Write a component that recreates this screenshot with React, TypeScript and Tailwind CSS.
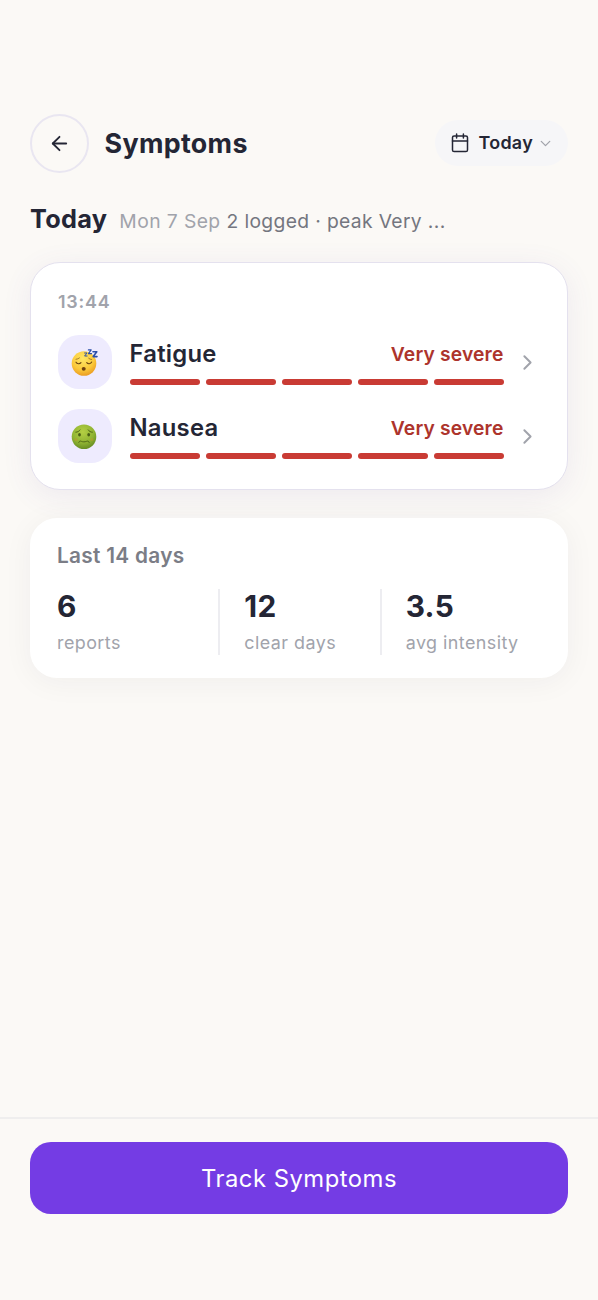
import type { ReactNode } from 'react';
import { ArrowLeft, ChevronDown, ChevronRight } from 'lucide-react';

const SleepyFace = () => (
  <svg width="28" height="28" viewBox="0 0 28 28" aria-hidden="true">
    <defs>
      <radialGradient id="sleepy" cx="0.45" cy="0.3" r="0.75">
        <stop offset="0" stopColor="#ffe766" />
        <stop offset="0.6" stopColor="#fbc93a" />
        <stop offset="1" stopColor="#e8941f" />
      </radialGradient>
    </defs>
    <circle cx="13" cy="15.5" r="12.3" fill="url(#sleepy)" />
    <g fill="none" stroke="#6b4310" strokeWidth="1.1" strokeLinecap="round">
      <path d="M5 14.2c1 1.9 3.8 2 5 .5M15.7 14.7c1.3 1.5 4 1.3 5-.6" />
      <path d="M5 11.3c1.3-.1 2.5-.6 3.5-1.4M17.7 10.3c.8.7 1.8 1.1 3 1.2" strokeWidth="0.6" />
    </g>
    <ellipse cx="12.7" cy="20.8" rx="2" ry="1.9" fill="#71420f" />
    <g fill="none" stroke="#2b4fa8" strokeLinejoin="round" strokeLinecap="round">
      <path d="M13.6 5h2.4l-2.4 3h2.5" strokeWidth="1" />
      <path d="M17.4 1.9h2.8l-2.7 3.8h3" strokeWidth="1.2" />
      <path d="M22 3.8h3.8l-3.6 4.8h3.8" strokeWidth="1.6" />
    </g>
  </svg>
);

const NauseatedFace = () => (
  <svg width="28" height="28" viewBox="0 0 28 28" aria-hidden="true">
    <defs>
      <radialGradient id="nauseated" cx="0.45" cy="0.3" r="0.75">
        <stop offset="0" stopColor="#b4cf43" />
        <stop offset="0.6" stopColor="#8fb332" />
        <stop offset="1" stopColor="#5f8520" />
      </radialGradient>
    </defs>
    <circle cx="13" cy="14.8" r="12.3" fill="url(#nauseated)" />
    <ellipse cx="8.5" cy="12.7" rx="1.4" ry="1.7" fill="#4a5f14" />
    <ellipse cx="17.7" cy="12.7" rx="1.4" ry="1.7" fill="#4a5f14" />
    <g fill="none" stroke="#4f6716" strokeWidth="1" strokeLinecap="round" strokeLinejoin="round">
      <path d="M4.8 10.2c1.9 0 3.3-.9 4.2-2.3M17.2 7.9c.9 1.4 2.3 2.3 4.2 2.3" />
      <path d="M7.8 20.4c.4-1.5 1.6-1.6 2.7-1 1.4.6 3.4.6 4.8 0 1.2-.6 2.5-.5 2.9 1" />
    </g>
    <circle cx="5" cy="17.5" r="1.5" fill="#c09a2d" opacity="0.5" />
    <circle cx="21" cy="17.5" r="1.5" fill="#c09a2d" opacity="0.5" />
  </svg>
);

const CalendarIcon = () => (
  <svg
    width="18"
    height="20"
    viewBox="0 0 18 20"
    fill="none"
    stroke="#242635"
    strokeWidth="1.5"
    strokeLinecap="round"
    strokeLinejoin="round"
  >
    <rect x="1.5" y="3" width="15" height="15.5" rx="1.6" />
    <path d="M1.5 8h15M5.6 1v4M12.4 1v4" />
  </svg>
);

type SymptomRowProps = {
  name: string;
  severity: string;
  level: number;
  icon: ReactNode;
};

const SymptomRow = ({ name, severity, level, icon }: SymptomRowProps) => (
  <div className="flex h-[54px] items-center">
    <div className="flex size-[54px] shrink-0 items-center justify-center rounded-[21px] bg-[#eeebfe] pr-px pb-px">
      {icon}
    </div>
    <div className="-mt-px ml-[17.5px] w-[375px]">
      <div className="flex h-8 items-center justify-between">
        <span className="text-[23.8px] font-semibold tracking-[0.25px] text-[#242635]">{name}</span>
        <span className="mt-px text-[19.3px] font-semibold tracking-[0.15px] text-[#ad342c]">{severity}</span>
      </div>
      <div className="mt-[9.5px] flex gap-1.5">
        {Array.from({ length: level }, (_, i) => (
          <div key={i} className="h-1.5 flex-1 rounded-full bg-[#c93b34]" />
        ))}
      </div>
    </div>
    <ChevronRight className="ml-[11.5px] text-[#a1a3ab]" size={25} strokeWidth={1.9} />
  </div>
);

const Stat = ({ value, label }: { value: string; label: string }) => (
  <div className="flex flex-col">
    <span className="h-9 text-[29.8px] leading-[35px] font-bold tracking-[0.3px] text-[#242635]">{value}</span>
    <span className="mt-1.5 text-[17.9px] leading-[23px] tracking-[0.45px] text-[#a1a3ab]">{label}</span>
  </div>
);

export default function App() {
  return (
    <div className="flex h-[1300px] w-[598px] flex-col bg-[#fbf9f6] font-['Inter',sans-serif] whitespace-nowrap">
      <header className="mx-[30px] mt-[113px] flex h-[60px] items-center">
        <button className="flex size-[59px] items-center justify-center rounded-full border-2 border-[#e9e6f1]">
          <ArrowLeft className="text-[#242635]" size={23} strokeWidth={1.9} />
        </button>
        <h1 className="mt-px ml-[15.5px] text-[26.8px] font-bold tracking-[0.35px] text-[#242635]">Symptoms</h1>
        <button className="ml-auto flex h-[46px] w-[133px] items-center rounded-full bg-[#f6f6f8] pl-[15.5px]">
          <CalendarIcon />
          <span className="ml-2.5 text-[17.9px] font-semibold tracking-[0.3px] text-[#242635]">Today</span>
          <ChevronDown className="ml-1 text-[#a1a3ab]" size={17} strokeWidth={1.8} />
        </button>
      </header>

      <div className="mx-[30px] mt-[27px] flex h-9 items-baseline">
        <h2 className="text-[25.3px] font-bold tracking-[0.3px] text-[#242635]">Today</h2>
        <span className="ml-3 text-[19.3px] tracking-[0.4px] text-[#a1a3ab]">Mon 7 Sep</span>
        <span className="ml-1.5 text-[19.3px] tracking-[0.35px] text-[#74767f]">2 logged · peak Very ...</span>
      </div>

      <main className="mx-[30px] mt-[26px] flex flex-col gap-7">
        <section className="h-[228px] rounded-[30px] border border-[#e4e1ee] bg-white px-[27px] pt-[26px] shadow-[0_6px_30px_rgba(100,80,170,0.09)]">
          <div className="mb-5 h-[26px] text-[17.9px] leading-[26px] font-semibold tracking-[0.8px] text-[#a1a3ab]">
            13:44
          </div>
          <div className="flex flex-col gap-5">
            <SymptomRow name="Fatigue" severity="Very severe" level={5} icon={<SleepyFace />} />
            <SymptomRow name="Nausea" severity="Very severe" level={5} icon={<NauseatedFace />} />
          </div>
        </section>

        <section className="h-[160px] rounded-[27px] bg-white px-[27px] pt-[22px] shadow-[0_4px_30px_rgba(40,35,60,0.05)]">
          <div className="h-[30px] text-[20.8px] leading-[31px] font-semibold tracking-[0.3px] text-[#7b7d86]">
            Last 14 days
          </div>
          <div className="mt-[19px] grid h-[66px] grid-cols-3">
            <Stat value="6" label="reports" />
            <div className="border-l-2 border-[#ededf1] pl-6">
              <Stat value="12" label="clear days" />
            </div>
            <div className="border-l-2 border-[#ededf1] pl-6">
              <Stat value="3.5" label="avg intensity" />
            </div>
          </div>
        </section>
      </main>

      <footer className="mt-auto h-[183px] border-t-2 border-[#efeeee] px-[30px] pt-[23px]">
        <button className="h-[72px] w-full rounded-[21px] bg-[#743ce4] pt-px text-[23.8px] tracking-[0.5px] text-white">
          Track Symptoms
        </button>
      </footer>
    </div>
  );
}
